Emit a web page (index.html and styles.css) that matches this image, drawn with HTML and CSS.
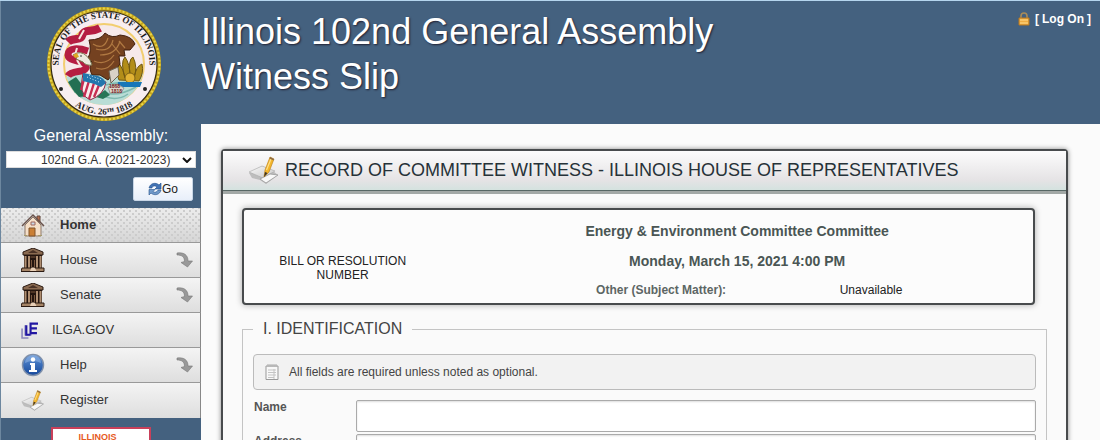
FILE: index.html
```html
<!DOCTYPE html>
<html lang="en">
<head>
  <meta charset="UTF-8">
  <meta name="viewport" content="width=device-width, initial-scale=1.0">
  <title>Illinois 102nd General Assembly - Witness Slip</title>
  <link rel="stylesheet" href="styles.css">
</head>
<body>
<!-- shared icons -->
<svg class="defs" width="0" height="0" aria-hidden="true">
  <linearGradient id="paper" x1="0" y1="0" x2="1" y2="1"><stop offset="0" stop-color="#fafafa"/><stop offset="1" stop-color="#c6c6c6"/></linearGradient>
  <linearGradient id="blue" x1="0" y1="0" x2="0" y2="1"><stop offset="0" stop-color="#5f93d6"/><stop offset="1" stop-color="#14479b"/></linearGradient>
  <symbol id="icon-capitol" viewBox="0 0 24 24">
    <path d="M12 0L22 4V7H2V4Z" fill="#8a6a50" stroke="#2b1a12"/>
    <path d="M7 5L12 2L17 5Z" fill="#4a3226"/>
    <path d="M3 7H21V20H3Z" fill="#24150f"/>
    <path d="M4.500 8V20M8 8V20M16 8V20M19.500 8V20" stroke="#b08f72" stroke-width="2"/>
    <path d="M9.500 9H14.500M10.500 12V19M13.500 12V19" stroke="#79573f"/>
    <path d="M1 20H23V23.500H0Z" fill="#a58466" stroke="#2b1a12"/>
    <path d="M9 23L10.500 19.500H13.500L15.500 23Z" fill="#e8cfb6"/>
  </symbol>
  <symbol id="icon-arrow" viewBox="0 0 18 18">
    <path d="M1 2C8 1 12 4 12 10H16.500L11.500 16L5 11.500L8.500 10.500C8.500 6 6 4 1 4Z" fill="#999" stroke="#777" stroke-width=".6"/>
  </symbol>
  <symbol id="icon-write" viewBox="0 0 32 30">
    <path d="M1 17L14 10L25 15L30 19L18 28L12 24L4 22Z" fill="#bdbdbd"/>
    <path d="M1 16L14 10L27 15L15 22Z" fill="url(#paper)" stroke="#aaa" stroke-width=".6"/>
    <path d="M12 23L22 18L30 19L18 27Z" fill="#f8f8f8" stroke="#999" stroke-width=".8"/>
    <path d="M16 21L17 14L22 1L26 3L21 16Z" fill="#f3b62c" stroke="#b97b14" stroke-width=".6"/>
    <path d="M18.500 14L23 3" stroke="#ffe08a" stroke-width="1.200"/>
    <path d="M22 1L26 3L25.500 4.500L21.500 2.500Z" fill="#8a6a45"/>
    <path d="M16 21L17 16L19.500 17Z" fill="#3d3525"/>
  </symbol>
</svg>

<div class="page">
  <aside class="sidebar">
    <svg class="seal" viewBox="0 0 116 116" role="img" aria-label="Seal of the State of Illinois">
      <defs>
        <path id="arc-top" d="M14.600 71A45.500 45.500 0 1 1 101.400 71"/>
        <path id="arc-bottom" d="M12 82A53 53 0 0 0 104 82"/>
      </defs>
      <circle cx="58" cy="58" r="57" fill="#c5a51e"/>
      <circle cx="58" cy="58" r="55.500" fill="none" stroke="#ead649" stroke-width="2" stroke-dasharray="2 2"/>
      <circle cx="58" cy="58" r="53" fill="#f8eef0" stroke="#332a16" stroke-width="1.200"/>
      <circle cx="58" cy="58" r="40" fill="#f6e9ea" stroke="#f2ce70" stroke-width="2"/>
      <path d="M20 71Q38 64 58 70Q80 75 97 67A40 40 0 0 1 25 82Z" fill="#b9ddd6"/>
      <path d="M28 86Q44 80 57 86T90 81M34 91Q48 87 60 91T82 88M60 79Q74 75 94 77" fill="none" stroke="#7fb9af" stroke-width="1.500"/>
      <!-- ribbon -->
      <path d="M54 22C45 27 38 22 36 30C35 35 27 31 22 36" fill="none" stroke="#b51d42" stroke-width="8"/>
      <path d="M42 45C33 42 22 41 22 49C23 57 39 53 40 60C41 68 26 63 22 70" fill="none" stroke="#b51d42" stroke-width="7"/>
      <path d="M38 24L33 33M31 42L29 49M31 54L35 61" stroke="#f5e4df" stroke-width="2"/>
      <!-- wheat and sun -->
      <path d="M73 74Q68 63 73 57Q78 64 79 72Q74 56 79 51Q84 58 84 70Q82 53 87 51Q92 61 88 72Q90 60 96 58Q98 67 93 75Z" fill="#b28d19" stroke="#705812"/>
      <circle cx="84" cy="72" r="5" fill="#e2b334" stroke="#806315"/>
      <path d="M72 76H96L94 81H71Z" fill="#1777b8"/>
      <!-- eagle -->
      <path d="M42 52Q46 45 43 34Q55 34 59 27Q66 33 74 29Q86 30 89 38L84 44L78 44L79 50L73 50L74 58L68 66L62 74L54 69L46 69Q42 61 46 56Z" fill="#744120" stroke="#41200e"/>
      <path d="M47 38Q58 45 62 32M50 43Q64 47 67 34M54 49Q70 49 74 35M48 55Q60 60 68 49M50 62Q61 66 68 55M73 35L79 42M66 38L74 48" fill="none" stroke="#b07942" stroke-width="1.200"/>
      <path d="M44 54Q38 45 31 47L27 49L31 51L30 53L37 56Q40 60 46 59Z" fill="#eceade" stroke="#7a754e"/>
      <path d="M27 49L31 47L33 51L29 52Z" fill="#dda922"/>
      <circle cx="35" cy="50" r=".8" fill="#222"/>
      <path d="M63 65L72 61L73 69L65 77Z" fill="#d9d2c8" stroke="#6c6455"/>
      <!-- shield -->
      <path d="M22 76L30 71L37 80L40 90L33 91L27 84Z" fill="#236f53"/>
      <path d="M50 91L59 84L64 89L57 93Z" fill="#287658"/>
      <path d="M37 67Q47 75 60 76Q58 89 44 94Q32 89 37 67Z" fill="#f7eeee" stroke="#8b2846"/>
      <path d="M38 73L35 84M43 75L38 91M48 77L43 93M53 79L48 91" stroke="#c72d52" stroke-width="2.400"/>
      <path d="M37 67Q46 69 52 70Q58 72 60 77L55 81Q47 77 37 75Z" fill="#2376ad"/>
      <path d="M41 71L53 76M43 69L56 74" stroke="#d6edf5" stroke-dasharray="1 2"/>
      <path d="M62 81L71 78L78 82L75 87L64 87Z" fill="#ddd6cb" stroke="#999"/>
      <text class="seal-year" x="63" y="82">1868</text>
      <text class="seal-year" x="65" y="87">1818</text>
      <text class="seal-text"><textPath href="#arc-top" startOffset="50%" text-anchor="middle">SEAL OF THE STATE OF ILLINOIS</textPath></text>
      <text class="seal-text"><textPath href="#arc-bottom" startOffset="50%" text-anchor="middle">AUG. 26ᵀᴴ 1818</textPath></text>
      <circle cx="15" cy="83" r="2" fill="#222"/>
      <circle cx="99" cy="83" r="2" fill="#222"/>
    </svg>

    <form class="ga-form">
      <label for="ga">General Assembly:</label>
      <div class="select-wrap">
        <select id="ga"><option>102nd G.A. (2021-2023)</option></select>
        <svg viewBox="0 0 10 6" aria-hidden="true"><path d="M1 1L5 5L9 1" fill="none" stroke="#111" stroke-width="2"/></svg>
      </div>
      <button type="button" class="go">
        <svg viewBox="0 0 14 14" aria-hidden="true">
          <path d="M1 6C2 1 8 0 11 3L13 1V7H7L9 5C7 3 4 4 4 6Z" fill="#4374b5" stroke="#24508c" stroke-width=".6"/>
          <path d="M13 8C12 13 6 14 3 11L1 13V7.500H7L5 9.500C7 11 9 10 10 8Z" fill="#7199c9" stroke="#24508c" stroke-width=".6"/>
        </svg>Go
      </button>
    </form>

    <nav class="menu">
      <a href="#" class="active">
        <svg class="icon" viewBox="0 0 24 24">
          <path d="M16 3H19V9H16Z" fill="#b76d4d" stroke="#65493c"/>
          <path d="M4 12L12 4L20 12V23H4Z" fill="#f5dfc8" stroke="#8e7868"/>
          <path d="M1 13L12 2L23 13" fill="none" stroke="#68514a" stroke-width="1.500"/>
          <path d="M8 23V15H14V23Z" fill="#ca7f35" stroke="#81552d"/>
          <path d="M10 9H14V12H10Z" fill="#c9d9e7" stroke="#a2665b"/>
          <path d="M3 22.500H6M17 22.500H21" stroke="#a59a6a"/>
        </svg>
        <span>Home</span>
      </a>
      <a href="#"><svg class="icon"><use href="#icon-capitol"/></svg><span>House</span><svg class="arrow"><use href="#icon-arrow"/></svg></a>
      <a href="#"><svg class="icon"><use href="#icon-capitol"/></svg><span>Senate</span><svg class="arrow"><use href="#icon-arrow"/></svg></a>
      <a href="#" class="ilga">
        <svg class="icon" viewBox="0 0 16 16">
          <path d="M1 6V15H7M4 3V12H10" fill="none" stroke="#8c88bd" stroke-width="1.500"/>
          <path d="M5 3V12H9M16 1.500H9V6H15M9 6V10.500H15" fill="none" stroke="#2217a2" stroke-width="2"/>
        </svg>
        <span>ILGA.GOV</span>
      </a>
      <a href="#">
        <svg class="icon" viewBox="0 0 24 24">
          <circle cx="12" cy="12" r="10.500" fill="url(#blue)" stroke="#8091ab" stroke-width="1.400"/>
          <path d="M4 10A8 8 0 0 1 20 10Q12 6 4 10Z" fill="#9cbce7" opacity=".5"/>
          <circle cx="12" cy="6.500" r="2.200" fill="#fff"/>
          <path d="M9 10H14V17H16V19H8V17H10V12H9Z" fill="#fff"/>
        </svg>
        <span>Help</span><svg class="arrow"><use href="#icon-arrow"/></svg>
      </a>
      <a href="#"><svg class="icon"><use href="#icon-write"/></svg><span>Register</span></a>
    </nav>

    <a href="#" class="banner">ILLINOIS</a>
  </aside>

  <div class="content">
    <header class="header">
      <h1>Illinois 102nd General Assembly<br>Witness Slip</h1>
      <div class="logon">
        <svg viewBox="0 0 12 14" aria-hidden="true">
          <path d="M3 7V4A3 3 0 0 1 9 4V7" fill="none" stroke="#a98b58" stroke-width="1.600"/>
          <path d="M1 6H11V13H1Z" fill="#f0ad42" stroke="#b87820"/>
          <path d="M2 8H10M2 11H10" stroke="#ffdc8c"/>
        </svg>
        [ <a href="#">Log On</a> ]
      </div>
    </header>

    <main class="main">
      <section class="panel">
        <h2><svg aria-hidden="true"><use href="#icon-write"/></svg>RECORD OF COMMITTEE WITNESS - ILLINOIS HOUSE OF REPRESENTATIVES</h2>
        <div class="panel-body">
          <div class="hearing">
            <div class="bill">BILL OR RESOLUTION NUMBER</div>
            <div class="details">
              <h3>Energy &amp; Environment Committee Committee</h3>
              <h3>Monday, March 15, 2021 4:00 PM</h3>
              <div class="subject">
                <strong>Other (Subject Matter):</strong>
                <span>Unavailable</span>
              </div>
            </div>
          </div>

          <fieldset>
            <legend>I. IDENTIFICATION</legend>
            <p class="note">
              <svg viewBox="0 0 14 16" aria-hidden="true">
                <path d="M1 2H13V15.500H1Z" fill="#f8f8f8" stroke="#999"/>
                <path d="M3 0V3M5 0V3M7 0V3M9 0V3M11 0V3" stroke="#aaa"/>
                <path d="M3 6H11M3 8.500H11M3 11H11M3 13.500H9M9 5V15" stroke="#c4c4c4"/>
              </svg>
              All fields are required unless noted as optional.
            </p>
            <div class="field">
              <label for="name">Name</label>
              <input type="text" id="name">
            </div>
            <div class="field">
              <label for="address">Address</label>
              <input type="text" id="address">
            </div>
          </fieldset>
        </div>
      </section>
    </main>
  </div>
</div>
</body>
</html>
```

FILE: styles.css
```css
* { box-sizing: border-box; }
body { margin: 0; font-family: "Liberation Sans", Arial, sans-serif; font-size: 12px; color: #222; background: #44617f; }
a { color: inherit; text-decoration: none; }
h1, h2, h3, p { margin: 0; font-weight: normal; }
.defs { position: absolute; }

.page { display: grid; grid-template-columns: 201px 1fr; height: 100vh; overflow: hidden; border-top: 1px solid #b5d5ee; }

/* sidebar */
.sidebar { border-left: 1px solid #6d879f; display: flex; flex-direction: column; }
.seal { width: 116px; height: 116px; margin: 5px 0 0 45px; flex: none; }
.seal-text { font: bold 9px "Liberation Serif", serif; fill: #1c1c1c; }
.seal-year { font: bold 5px "Liberation Sans", sans-serif; fill: #722; }

.ga-form { display: flex; flex-direction: column; padding: 4px 5px 0; height: 86px; }
.ga-form label { color: #fff; font-size: 16px; line-height: 20px; text-align: center; }
.select-wrap { position: relative; margin-top: 5px; }
.select-wrap select { display: block; width: 100%; height: 17px; padding: 0 18px 0 34px; border: 1px solid #ddd; border-radius: 0; background: #fff; color: #333; font: 12px "Liberation Sans", Arial, sans-serif; appearance: none; }
.select-wrap svg { position: absolute; right: 4px; top: 6px; width: 10px; height: 6px; pointer-events: none; }
.go { align-self: flex-end; display: flex; align-items: center; justify-content: center; width: 60px; height: 24px; margin: 9px 3px 0 0; padding: 0; border: 1px solid #c8d6e6; border-radius: 2px; background: linear-gradient(#fff, #e8effa); font: 12px "Liberation Sans", Arial, sans-serif; color: #222; }
.go svg { width: 14px; height: 14px; }

.menu a { display: flex; align-items: center; height: 35px; padding: 0 6px 0 20px; border-bottom: 1px solid #999; border-right: 1px solid #888; background: linear-gradient(#f4f4f4, #dedede); color: #333; }
.menu a:last-child { border-bottom: 0; }
.menu a.active { font-weight: bold; background: radial-gradient(circle, #cccccc 1px, transparent 1px) 0 0 / 6px 6px, radial-gradient(circle, #cccccc 1px, transparent 1px) 3px 3px / 6px 6px, linear-gradient(#ececec, #d6d6d6); }
.menu .icon { width: 24px; height: 24px; margin-right: 15px; }
.menu .ilga .icon { width: 17px; height: 17px; margin-right: 14px; }
.menu .arrow { width: 18px; height: 18px; margin-left: auto; }
.menu span { padding-bottom: 2px; font-size: 13px; }

.banner { width: 100px; height: 60px; flex: none; margin: 9px 0 0 50px; padding: 3px 7px 0 0; border: 2px solid #c9405a; background: #fff; color: #e65a1e; font: bold 9px "Liberation Sans", Arial, sans-serif; text-align: center; }

/* header */
.header { display: flex; justify-content: space-between; align-items: flex-start; height: 123px; padding-top: 8px; color: #fff; }
.header h1 { font-size: 36px; line-height: 45px; text-shadow: 1px 1px 2px #223; }
.logon { display: flex; align-items: center; gap: 3px; padding: 3px 9px 0 0; font-size: 12px; font-weight: bold; }
.logon svg { width: 12px; height: 14px; margin-right: 2px; }

/* main panel */
.main { background: #fbfbfb; min-height: 100vh; padding: 25px 32px 0 20px; }
.panel { border: 2px solid #484b4d; border-radius: 4px; box-shadow: 0 0 5px #888; background: #fafafa; min-height: 600px; }
.panel h2 { display: flex; align-items: center; height: 40px; padding-left: 25px; border-bottom: 1px solid #576765; box-shadow: 0 3px 0 #a2a8a6; background: linear-gradient(#fcfcfc, #e5e3e5 75%, #d4e2df); font-size: 18px; color: #263238; }
.panel h2 svg { width: 32px; height: 30px; margin-right: 5px; }
.panel-body { padding: 17px 19px; }

.hearing { display: flex; height: 97px; margin-right: 12px; border: 2px solid #484b4d; border-radius: 4px; box-shadow: 0 0 6px #aaa; background: #fcfcfc; }
.bill { display: flex; align-items: center; width: 25%; padding: 22px 30px 0; text-align: center; line-height: 14px; }
.details { flex: 1; padding-top: 6px; text-align: center; }
.details h3 { font-size: 14px; font-weight: bold; line-height: 30px; color: #4a5654; }
.subject { display: grid; grid-template-columns: 1fr 1fr; line-height: 28px; }
.subject strong { text-align: right; padding-right: 11px; color: #5c6664; }
.subject span { padding-right: 28px; }

fieldset { margin: 15px 0 0; padding: 16px 10px 20px; border: 1px solid #c4c4c4; }
legend { padding: 0 10px; font-size: 16px; line-height: 18px; color: #444; }
.note { display: flex; align-items: center; gap: 10px; height: 36px; padding-left: 11px; border: 1px solid #bbb; border-radius: 4px; background: #f2f2f2; color: #444; }
.note svg { width: 14px; height: 16px; }
.field { display: flex; margin-top: 2px; }
.note + .field { margin-top: 10px; }
.field label { width: 103px; padding-left: 1px; line-height: 14px; font-weight: bold; color: #555; }
.field input { flex: 1; height: 32px; border: 1px solid #aaa; border-radius: 2px; background: #fff; box-shadow: inset 0 1px 2px #ddd; }
```
